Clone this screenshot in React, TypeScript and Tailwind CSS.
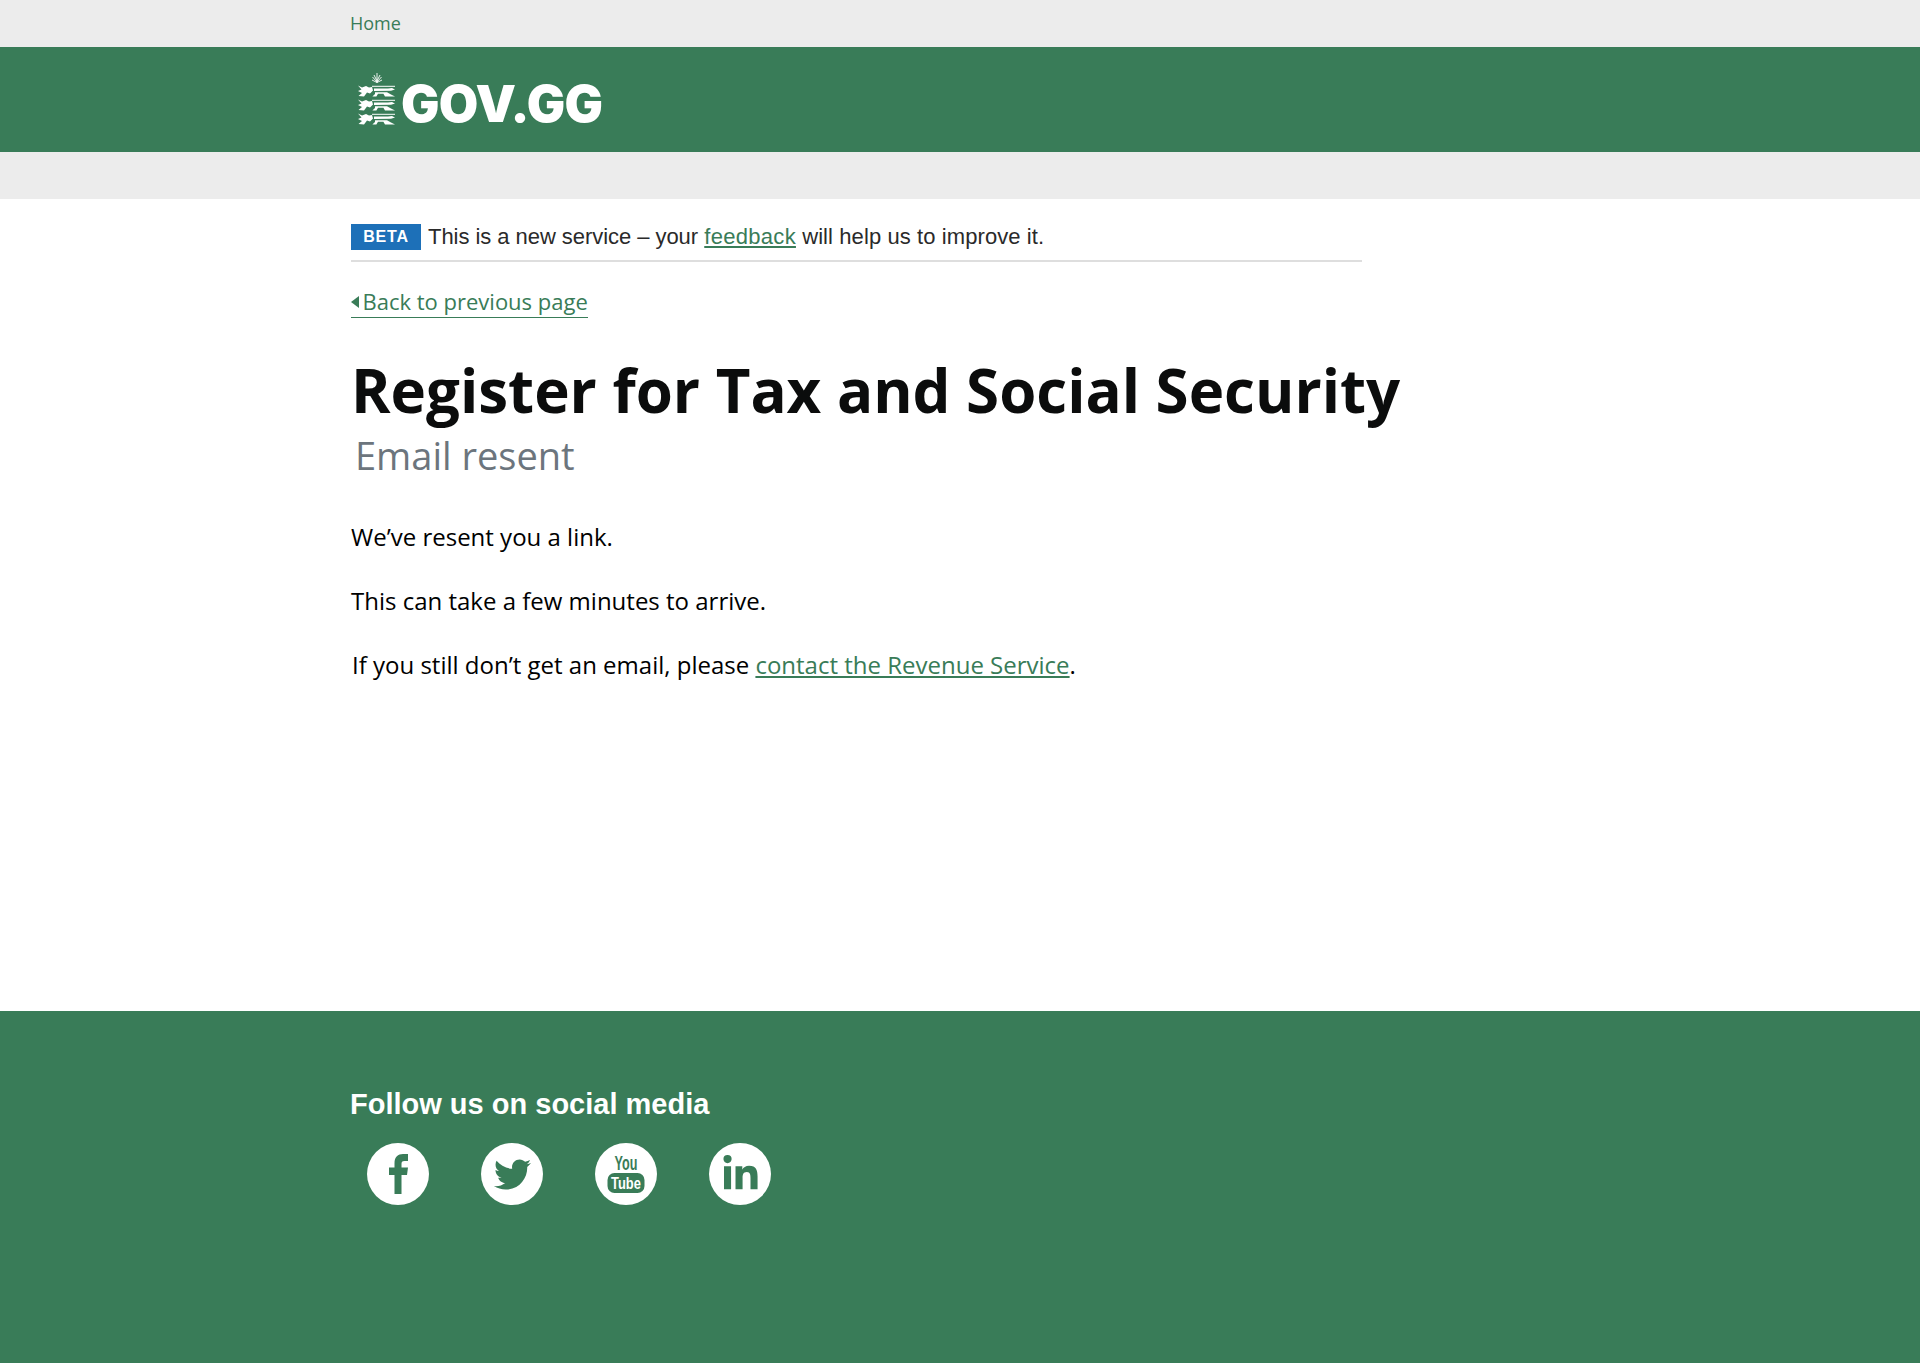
import { FaLinkedinIn, FaTwitter } from "react-icons/fa";

const openSans = "font-['Open_Sans',sans-serif]";
const arial = "font-['Liberation_Sans',Arial,sans-serif]";

function Lion({ y }: { y: number }) {
  return (
    <g transform={`translate(0 ${y})`} fill="#fff">
      <path d="M1 0.5 L5 2.5 L9 1 L12 2.5 L15 2 L16 5.5 L13 8.5 L10 7.5 L7 11.5 L1.5 11 L5 8 L1 6 L4.5 4.5 Z" />
      <path d="M15 0.8 H38 V1.8 H15 Z" />
      <path d="M17 3.6 H31 L35 3 L38 4.6 L34 5.8 L17 6 Z" />
      <path d="M18 7.2 H28 L30 7.2 L34 9.6 L38 11.4 H28 L26.4 8.8 H21 L19.4 11.4 H15.4 L18 9 Z" />
    </g>
  );
}

function Crest() {
  return (
    <svg width="39" height="52" viewBox="0 0 39 52" className="shrink-0">
      <g stroke="#fff" strokeWidth="0.9">
        <path d="M20 0 V10 M20 9 L15.5 4 M20 9 L24.5 4 M20 8 L17 2 M20 8 L23 2 M20 9.5 L15 7 M20 9.5 L25 7" />
      </g>
      <Lion y={12} />
      <Lion y={26} />
      <Lion y={40} />
    </svg>
  );
}

function SocialIcon({ children }: { children: React.ReactNode }) {
  return (
    <a className="flex h-[62px] w-[62px] items-center justify-center rounded-full bg-white text-[#397c58]">
      {children}
    </a>
  );
}

function Facebook() {
  return (
    <svg width="19" height="40" viewBox="0 0 19 40" fill="#397c58">
      <path d="M5.5 40 V21 H0 V13.5 H5.5 V9 C5.5 3 9 0 14 0 H19 V7 H15.5 C13 7 12.5 8 12.5 10 V13.5 H19 L18 21 H12.5 V40 Z" />
    </svg>
  );
}

function YouTube() {
  return (
    <svg width="38" height="42" viewBox="0 0 38 42" fill="#397c58" className="overflow-visible">
      <text
        transform="translate(19 17) scale(0.6 1)"
        textAnchor="middle"
        className={`${arial} font-bold`}
        fontSize="21"
      >
        You
      </text>
      <rect x="0.5" y="20" width="37" height="20" rx="7" />
      <text
        transform="translate(19 35.5) scale(0.76 1)"
        textAnchor="middle"
        fill="#fff"
        className={`${arial} font-bold`}
        fontSize="17"
      >
        Tube
      </text>
    </svg>
  );
}

export default function App() {
  return (
    <div className={`flex min-h-[1363px] flex-col bg-white ${openSans}`}>
      <div className="h-[47px] bg-[#ececec] pl-[350px] pt-[11px] text-[18px] leading-[24px] text-[#397c58]">
        <a>Home</a>
      </div>

      <header className="flex h-[105px] items-start gap-[5px] bg-[#397c58] pl-[357px] pt-[26px]">
        <Crest />
        <span className="mt-[5px] font-['Inter',sans-serif] text-[51px] leading-[52px] font-black tracking-[-0.6px] text-white">
          GOV.GG
        </span>
      </header>

      <div className="h-[47px] bg-[#ececec]" />

      <main className="flex-1 pl-[351px]">
        <div className={`mt-[25px] flex w-[1011px] items-center gap-[7px] border-b-2 border-[#dedede] pb-[10px] ${arial}`}>
          <span className="flex h-[26px] w-[70px] items-center justify-center bg-[#1d70b8] text-[16px] font-bold tracking-[0.8px] text-white">
            BETA
          </span>
          <p className="text-[22px] leading-[26px] font-light tracking-[0.09px] text-[#2a2a2a]">
            <span className="tracking-[-0.05px]">This is a new service – your</span>{" "}
            <a className="tracking-[0.3px] text-[#397c58] underline underline-offset-2">feedback</a> will help us to
            improve it.
          </p>
        </div>

        <a className="mt-[24px] inline-flex items-center gap-[3.5px] border-b border-[#397c58] text-[22px] leading-[31px] text-[#397c58]">
          <svg width="8" height="12" viewBox="0 0 8 12" fill="#397c58">
            <path d="M8 0 V12 L0 6 Z" />
          </svg>
          Back to previous page
        </a>

        <h1 className="mt-[37px] text-[60px] leading-[70px] font-bold text-[#0b0c0c]">
          Register for Tax and Social Security
        </h1>
        <h2 className="mt-[4px] ml-[4px] text-[38px] leading-[52px] text-[#6c757d]">Email resent</h2>

        <p className="mt-[39px] text-[24px] leading-[34px] text-black">We’ve resent you a link.</p>
        <p className="mt-[30px] text-[24px] leading-[34px] text-black">This can take a few minutes to arrive.</p>
        <p className="mt-[30px] ml-[1px] text-[24px] leading-[34px] text-black">
          If you still don’t get an email, please{" "}
          <a className="text-[#397c58] underline underline-offset-2">contact the Revenue Service</a>.
        </p>
      </main>

      <footer className="h-[352px] bg-[#397c58] pl-[350px] pt-[76px]">
        <h3 className={`text-[29px] leading-[34px] font-bold text-white ${arial}`}>Follow us on social media</h3>
        <div className="mt-[22px] ml-[17px] flex gap-[52px]">
          <SocialIcon>
            <Facebook />
          </SocialIcon>
          <SocialIcon>
            <FaTwitter size={37} />
          </SocialIcon>
          <SocialIcon>
            <YouTube />
          </SocialIcon>
          <SocialIcon>
            <FaLinkedinIn size={39} />
          </SocialIcon>
        </div>
      </footer>
    </div>
  );
}
